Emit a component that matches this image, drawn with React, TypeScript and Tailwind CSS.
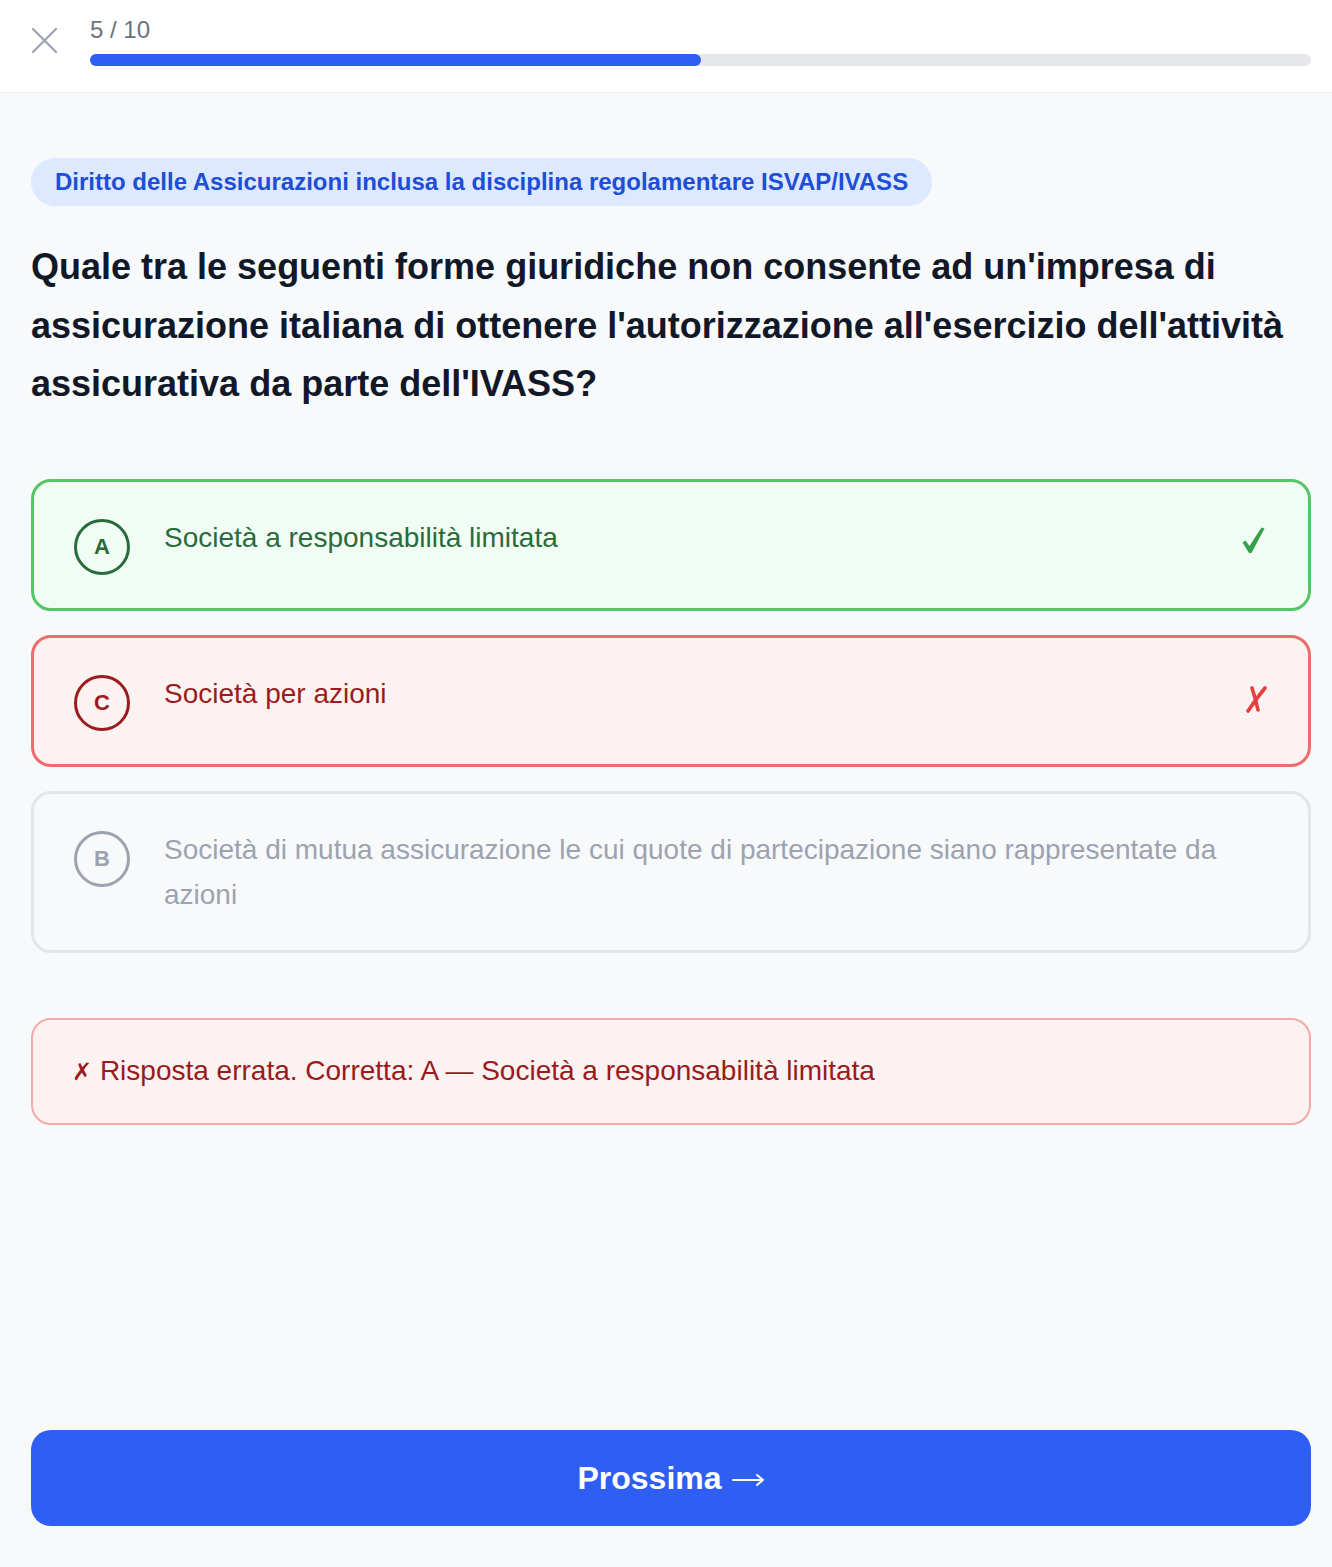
import React from "react";

type Opt = {
  letter: string;
  text: string;
  state: "correct" | "wrong" | "neutral";
};

const options: Opt[] = [
  { letter: "A", text: "Società a responsabilità limitata", state: "correct" },
  { letter: "C", text: "Società per azioni", state: "wrong" },
  {
    letter: "B",
    text: "Società di mutua assicurazione le cui quote di partecipazione siano rappresentate da azioni",
    state: "neutral",
  },
];

function CheckIcon() {
  return (
    <svg width="23" height="27" viewBox="0 0 23 27" className="shrink-0">
      <path d="M0.5 15.5 L3.5 13.5 L7.5 19 L19.5 0.5 L22.5 1.5 L9.5 26 L7 26 Z" fill="#35a04a" />
    </svg>
  );
}

function CrossIcon() {
  return (
    <svg width="22" height="27" viewBox="0 0 22 27" className="shrink-0">
      <path d="M7 2 C9 8 11 14 13 24" stroke="#e53e3e" strokeWidth="3.6" strokeLinecap="round" fill="none" />
      <path d="M20 2 C15 8 9 16 3 25" stroke="#e53e3e" strokeWidth="3.6" strokeLinecap="round" fill="none" />
    </svg>
  );
}

function OptionCard({ o }: { o: Opt }) {
  const card =
    o.state === "correct"
      ? "border-[#55c566] bg-[#f1fdf4]"
      : o.state === "wrong"
      ? "border-[#ee6c6c] bg-[#fdf2f2]"
      : "border-[#e3e5e8] bg-[#f8f9fb]";
  const circle =
    o.state === "correct"
      ? "border-[#2a6b3c] text-[#2a6b3c]"
      : o.state === "wrong"
      ? "border-[#9b1c1c] text-[#9b1c1c]"
      : "border-[#9ca3af] text-[#9ca3af]";
  const txt =
    o.state === "correct"
      ? "text-[#2a6b3c]"
      : o.state === "wrong"
      ? "text-[#9b1c1c]"
      : "text-[#9ca3af]";
  return (
    <div className={`flex items-start rounded-[20px] border-[3px] pl-[40px] pr-[40px] py-[33px] ${card}`}>
      <div
        className={`mt-[4px] flex h-14 w-14 shrink-0 items-center justify-center rounded-full border-[3px] text-[22px] font-bold ${circle}`}
      >
        {o.letter}
      </div>
      <div className={`ml-[34px] flex-1 text-[28px] leading-[45px] ${txt}`}>{o.text}</div>
      {o.state === "correct" && (
        <div className="ml-4 mr-[3px] mb-[8px] self-center">
          <CheckIcon />
        </div>
      )}
      {o.state === "wrong" && (
        <div className="ml-4 mr-[1px] mb-[2px] self-center">
          <CrossIcon />
        </div>
      )}
    </div>
  );
}

export default function App() {
  return (
    <div
      className="flex h-screen flex-col bg-[#f8f9fb]"
      style={{ fontFamily: "'Liberation Sans', Arial, sans-serif" }}
    >
      <header className="flex items-center border-b border-[#eef0f2] bg-white pl-[32px] pr-[21px] pt-[15px] pb-[26px]">
        <svg width="25" height="25" viewBox="0 0 25 25" className="shrink-0">
          <path d="M1 1 L24 24 M24 1 L1 24" stroke="#9ca3af" strokeWidth="2.2" strokeLinecap="round" />
        </svg>
        <div className="ml-[33px] flex-1">
          <div className="text-[24px] leading-[30px] text-[#6b7280]">5 / 10</div>
          <div className="mt-[9px] h-3 w-full rounded-full bg-[#e5e7eb]">
            <div className="h-3 w-1/2 rounded-full bg-[#2f5ef2]" />
          </div>
        </div>
      </header>

      <main className="flex flex-1 flex-col pl-[31px] pr-[21px] pt-[65px] pb-[41px]">
        <div className="self-start rounded-full bg-[#dde9fe] px-6 text-[24px] font-bold leading-[48px] text-[#1d4ed8]">
          Diritto delle Assicurazioni inclusa la disciplina regolamentare ISVAP/IVASS
        </div>

        <h1 className="mt-[32px] text-[36px] font-bold leading-[58.5px] text-[#111827]">
          Quale tra le seguenti forme giuridiche non consente ad un'impresa di assicurazione italiana di ottenere
          l'autorizzazione all'esercizio dell'attività assicurativa da parte dell'IVASS?
        </h1>

        <div className="mt-[65px] flex flex-col gap-6">
          {options.map((o) => (
            <OptionCard key={o.letter} o={o} />
          ))}
        </div>

        <div className="mt-[65px] rounded-[20px] border-2 border-[#f5a9a9] bg-[#fdf2f2] px-[39px] py-[33px] text-[28px] leading-[36px] text-[#991b1b]">
          <span style={{ fontFamily: "'DejaVu Sans', sans-serif" }} className="text-[24px] font-bold">✗</span> Risposta errata. Corretta: A — Società a responsabilità limitata
        </div>

        <button className="mt-auto flex h-[96px] w-full items-center justify-center rounded-[20px] bg-[#2f5ef2] text-[32px] font-bold text-white">
          Prossima
          <svg width="33" height="14" viewBox="0 0 33 14" className="ml-[10px] mt-[3px]">
            <path d="M1 7 H31 M25 2 L31 7 L25 12" stroke="white" strokeWidth="2" fill="none" strokeLinecap="round" strokeLinejoin="round" />
          </svg>
        </button>
      </main>
    </div>
  );
}
